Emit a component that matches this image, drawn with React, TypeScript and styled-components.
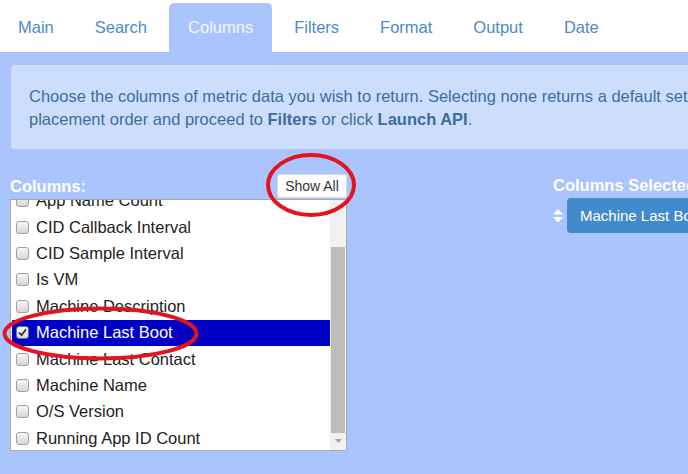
import React from 'react';
import styled, { createGlobalStyle } from 'styled-components';

const tabs = ['Main', 'Search', 'Columns', 'Filters', 'Format', 'Output', 'Date'];

const columns = [
    'App Name Count',
    'CID Callback Interval',
    'CID Sample Interval',
    'Is VM',
    'Machine Description',
    'Machine Last Boot',
    'Machine Last Contact',
    'Machine Name',
    'O/S Version',
    'Running App ID Count',
];

const selected = 'Machine Last Boot';

export default function App() {
    return (
        <Root>
            <GlobalStyle />
            <TabBar>
                {tabs.map((t) => (
                    <Tab key={t} $active={t === 'Columns'}>{t}</Tab>
                ))}
            </TabBar>
            <Panel>
                <Info>
                    Choose the columns of metric data you wish to return. Selecting none returns a default set of columns. Drag to change column
                    <br />
                    placement order and proceed to <b>Filters</b> or click <b>Launch API</b>.
                </Info>
                <Columns>
                    <div>
                        <Header>
                            <Label>Columns:</Label>
                            <ShowAll>Show All</ShowAll>
                        </Header>
                        <ListBox>
                            <Items>
                                {columns.map((c) => (
                                    <Row key={c} $selected={c === selected}>
                                        <Check $checked={c === selected}>
                                            {c === selected && (
                                                <svg width="9" height="9" viewBox="0 0 9 9">
                                                    <path d="M1 4.6 L3.6 7.2 L8 1.2" fill="none" stroke="#333" strokeWidth="1.8" />
                                                </svg>
                                            )}
                                        </Check>
                                        {c}
                                    </Row>
                                ))}
                            </Items>
                            <ScrollTrack>
                                <Thumb />
                                <ArrowDown>
                                    <svg width="7" height="4" viewBox="0 0 7 4">
                                        <path d="M0 0 H7 L3.5 4 Z" fill="#a3a3a3" />
                                    </svg>
                                </ArrowDown>
                            </ScrollTrack>
                        </ListBox>
                    </div>
                    <div>
                        <Label>Columns Selected</Label>
                        <SelectedRow>
                            <svg width="10" height="14" viewBox="0 0 10 14">
                                <path d="M5 0 L10 5.5 H0 Z" fill="#fff" />
                                <path d="M0 8 H10 L5 13.5 Z" fill="#fff" />
                            </svg>
                            <Chip>{selected}</Chip>
                        </SelectedRow>
                    </div>
                </Columns>
            </Panel>
            <Marks width="688" height="474" viewBox="0 0 688 474">
                <ellipse cx="311" cy="185" rx="43" ry="30" fill="none" stroke="#e2141f" strokeWidth="4" />
                <ellipse cx="100.5" cy="333.5" rx="96" ry="25" fill="none" stroke="#e2141f" strokeWidth="4" />
            </Marks>
        </Root>
    );
}

const GlobalStyle = createGlobalStyle`
    html, body {
        margin: 0;
        padding: 0;
        overflow: hidden;
    }
    body {
        font-family: "Liberation Sans", Arial, sans-serif;
        background: #aac5fd;
    }
`;

const Root = styled.div`
    position: relative;
    width: 1000px;
    min-height: 474px;
    background: #aac5fd;
`;

const TabBar = styled.nav`
    display: flex;
    align-items: flex-end;
    gap: 3px;
    height: 52px;
    margin-left: -1px;
    background: #fff;
`;

const Tab = styled.div<{ $active?: boolean }>`
    height: 49px;
    line-height: 49px;
    padding: 0 19px;
    font-size: 16.5px;
    color: ${(p) => (p.$active ? '#f4f8ff' : '#4b8bc9')};
    background: ${(p) => (p.$active ? '#aac5fd' : 'transparent')};
    border-radius: 5px 5px 0 0;
`;

const Panel = styled.div`
    padding: 13px 0 0 10px;
`;

const Info = styled.div`
    margin-left: 1px;
    padding: 20px 18px 18px;
    background: #cddefd;
    border-radius: 4px;
    color: #3c6e9b;
    font-size: 16.5px;
    line-height: 23px;
    white-space: nowrap;
`;

const Columns = styled.div`
    display: grid;
    grid-template-columns: 337px 1fr;
    column-gap: 206px;
    margin-top: 23px;
`;

const Header = styled.div`
    display: flex;
    justify-content: space-between;
    align-items: flex-end;
    height: 27px;
`;

const Label = styled.div`
    height: 26px;
    line-height: 27px;
    font-size: 16.5px;
    font-weight: bold;
    color: #fff;
    white-space: nowrap;
`;

const ShowAll = styled.button`
    width: 70px;
    height: 24px;
    margin-bottom: 1px;
    padding: 0;
    font-family: "Liberation Sans", Arial, sans-serif;
    font-size: 14px;
    color: #333;
    background: #fff;
    border: 1px solid #dcdcdc;
    border-radius: 3px;
`;

const ListBox = styled.div`
    display: flex;
    height: 250px;
    border: 1px solid #a9a9a9;
    background: #fff;
    overflow: hidden;
`;

const Items = styled.div`
    flex: 1;
    padding: 0 0 0 1px;
    margin-top: -12.4px;
`;

const Row = styled.div<{ $selected?: boolean }>`
    display: flex;
    align-items: center;
    gap: 7px;
    height: 26.4px;
    padding-left: 4px;
    font-size: 16.5px;
    white-space: nowrap;
    color: ${(p) => (p.$selected ? '#fff' : '#222')};
    background: ${(p) => (p.$selected ? '#0000c4' : 'transparent')};
`;

const Check = styled.span<{ $checked?: boolean }>`
    display: flex;
    align-items: center;
    justify-content: center;
    box-sizing: border-box;
    width: 13px;
    height: 13px;
    border: 1px solid ${(p) => (p.$checked ? '#5577b8' : '#a0a0a0')};
    border-radius: 3px;
    background: linear-gradient(#f6f6f6, #d6d6d6);
`;

const ScrollTrack = styled.div`
    display: flex;
    flex-direction: column;
    width: 16px;
    background: #f1f1f1;
`;

const Thumb = styled.div`
    height: 186px;
    margin: 47px 1px 0;
    background: #bdbdbd;
`;

const ArrowDown = styled.div`
    display: flex;
    align-items: center;
    justify-content: center;
    height: 16px;
`;

const SelectedRow = styled.div`
    display: flex;
    align-items: center;
    gap: 4px;
`;

const Chip = styled.div`
    height: 35px;
    line-height: 35px;
    padding: 0 13px;
    font-size: 15px;
    color: #fff;
    background: #428bca;
    border-radius: 4px;
    white-space: nowrap;
`;

const Marks = styled.svg`
    position: absolute;
    top: 0;
    left: 0;
    pointer-events: none;
`;
